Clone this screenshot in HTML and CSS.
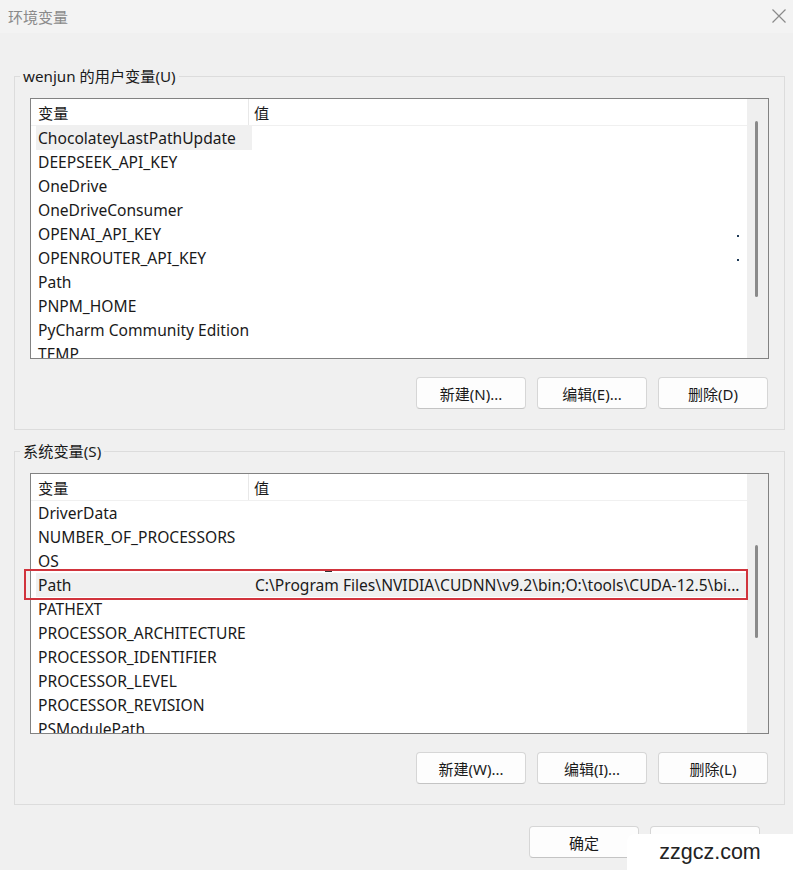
FILE: index.html
```html
<!DOCTYPE html>
<html lang="zh-CN">
<head>
<meta charset="utf-8">
<title>环境变量</title>
<link rel="stylesheet" href="styles.css">
</head>
<body>
<div class="titlebar">
  <span class="title">环境变量</span>
  <svg class="close" width="14" height="14" viewBox="0 0 14 14"><path d="M0.5 0.5 L13.5 13.5 M13.5 0.5 L0.5 13.5" stroke="#8a8a8a" stroke-width="1.2" fill="none"/></svg>
</div>
<div class="main">
  <fieldset class="group">
    <legend>wenjun 的用户变量(U)</legend>
    <div class="list">
      <div class="list-main">
        <div class="head"><div class="hname">变量</div><div class="hval">值</div></div>
        <div class="rows">
          <div class="row hover"><div class="name">ChocolateyLastPathUpdate</div><div class="val"></div></div>
          <div class="row"><div class="name">DEEPSEEK_API_KEY</div><div class="val"></div></div>
          <div class="row"><div class="name">OneDrive</div><div class="val"></div></div>
          <div class="row"><div class="name">OneDriveConsumer</div><div class="val"></div></div>
          <div class="row"><div class="name">OPENAI_API_KEY</div><div class="val"><span class="dot"></span></div></div>
          <div class="row"><div class="name">OPENROUTER_API_KEY</div><div class="val"><span class="dot"></span></div></div>
          <div class="row"><div class="name">Path</div><div class="val"></div></div>
          <div class="row"><div class="name">PNPM_HOME</div><div class="val"></div></div>
          <div class="row"><div class="name">PyCharm Community Edition</div><div class="val"></div></div>
          <div class="row"><div class="name">TEMP</div><div class="val"></div></div>
        </div>
      </div>
      <div class="scrollbar"><div class="thumb thumb-user"></div></div>
    </div>
    <div class="btns">
      <button class="btn">新建(N)...</button>
      <button class="btn">编辑(E)...</button>
      <button class="btn">删除(D)</button>
    </div>
  </fieldset>

  <fieldset class="group group-sys">
    <legend>系统变量(S)</legend>
    <div class="list-wrap">
      <div class="list">
        <div class="list-main">
          <div class="head"><div class="hname">变量</div><div class="hval">值</div></div>
          <div class="rows">
            <div class="row"><div class="name">DriverData</div><div class="val"></div></div>
            <div class="row"><div class="name">NUMBER_OF_PROCESSORS</div><div class="val"></div></div>
            <div class="row"><div class="name">OS</div><div class="val"><span class="mark"></span></div></div>
            <div class="row selected"><div class="name">Path</div><div class="val">C:\Program Files\NVIDIA\CUDNN\v9.2\bin;O:\tools\CUDA-12.5\bi...</div></div>
            <div class="row"><div class="name">PATHEXT</div><div class="val"></div></div>
            <div class="row"><div class="name">PROCESSOR_ARCHITECTURE</div><div class="val"></div></div>
            <div class="row"><div class="name">PROCESSOR_IDENTIFIER</div><div class="val"></div></div>
            <div class="row"><div class="name">PROCESSOR_LEVEL</div><div class="val"></div></div>
            <div class="row"><div class="name">PROCESSOR_REVISION</div><div class="val"></div></div>
            <div class="row"><div class="name">PSModulePath</div><div class="val"></div></div>
          </div>
        </div>
        <div class="scrollbar"><div class="thumb thumb-sys"></div></div>
      </div>
      <div class="highlight-box"></div>
    </div>
    <div class="btns">
      <button class="btn">新建(W)...</button>
      <button class="btn">编辑(I)...</button>
      <button class="btn">删除(L)</button>
    </div>
  </fieldset>

  <div class="footer">
    <button class="btn">确定</button>
    <button class="btn">取消</button>
  </div>
</div>
<div class="watermark">zzgcz.com</div>
</body>
</html>
```

FILE: styles.css
```css
html, body {
  margin: 0;
  padding: 0;
}
body {
  width: 793px;
  height: 870px;
  overflow: hidden;
  position: relative;
  background: #f0f0f0;
  font-family: "Noto Sans", "Noto Sans CJK SC", sans-serif;
  color: #1a1a1a;
}
.titlebar {
  height: 33px;
  box-sizing: border-box;
  background: #f3f3f3;
  display: flex;
  align-items: center;
  justify-content: space-between;
  padding: 0 7px 0 8px;
}
.title {
  font-family: "Noto Sans CJK SC", sans-serif;
  font-size: 15px;
  color: #8a8a8a;
  line-height: 20px;
}
.close {
  display: block;
  margin-top: -2px;
}
.main {
  padding: 0 8px 0 14px;
}
.group {
  margin: 33px 0 0;
  padding: 12px 15px 20px;
  border: 1px solid #dcdcdc;
  min-width: 0;
}
.group-sys {
  margin-top: 11px;
}
.group legend {
  font-size: 15.2px;
  line-height: 20px;
  padding: 0 3px;
  margin-left: -10px;
  color: #1a1a1a;
}
.list-wrap {
  position: relative;
}
.list {
  height: 261px;
  box-sizing: border-box;
  border: 1px solid #828282;
  background: #fff;
  display: flex;
}
.list-main {
  flex: 1;
  overflow: hidden;
  min-width: 0;
}
.head {
  height: 27px;
  box-sizing: border-box;
  border-bottom: 1px solid #f0f0f0;
  display: flex;
  font-size: 15.2px;
}
.hname {
  width: 218px;
  padding-left: 7px;
  box-sizing: border-box;
  border-right: 1px solid #e8e8e8;
  display: flex;
  align-items: center;
}
.hval {
  padding-left: 5px;
  display: flex;
  align-items: center;
}
.rows {
  padding-left: 5px;
}
.row {
  height: 24px;
  display: flex;
  align-items: center;
  font-size: 15.6px;
  white-space: nowrap;
}
.name {
  width: 216px;
  height: 100%;
  box-sizing: border-box;
  padding-left: 2px;
  display: flex;
  align-items: center;
  flex: none;
}
.val {
  flex: 1;
  min-width: 0;
  height: 100%;
  padding-left: 3px;
  display: flex;
  align-items: center;
  overflow: hidden;
}
.row.hover .name {
  background: #f0f0f0;
}
.row.selected {
  background: #f0f0f0;
  margin-right: 1px;
}
.dot {
  width: 2px;
  height: 2px;
  background: #1f3b57;
  margin-left: auto;
  margin-right: 8px;
  margin-top: 4px;
}
.mark {
  width: 7px;
  height: 1px;
  background: #333;
  margin-left: 70px;
  margin-top: 20px;
}
.scrollbar {
  width: 21px;
  flex: none;
  background: #efefef;
}
.thumb {
  width: 3px;
  margin-left: 8px;
  background: #8a8a8a;
  border-radius: 2px;
}
.thumb-user {
  margin-top: 22px;
  height: 176px;
}
.thumb-sys {
  margin-top: 71px;
  height: 93px;
}
.highlight-box {
  position: absolute;
  z-index: 2;
  left: -6px;
  top: 96px;
  width: 724px;
  height: 31px;
  border: 2px solid #d1343d;
  box-sizing: border-box;
}
.btns {
  display: flex;
  justify-content: flex-end;
  gap: 11px;
  margin-top: 18px;
  padding-right: 1px;
}
.btn {
  width: 110px;
  height: 32px;
  box-sizing: border-box;
  border: 1px solid #d6d6d6;
  border-bottom-color: #c4c4c4;
  border-radius: 4px;
  background: #fdfdfd;
  font-family: "Noto Sans", "Noto Sans CJK SC", sans-serif;
  font-size: 15px;
  color: #1a1a1a;
  padding: 0;
}
.footer {
  display: flex;
  justify-content: flex-end;
  gap: 11px;
  margin-top: 21px;
  padding-right: 25px;
}
.watermark {
  position: absolute;
  right: 0;
  bottom: 0;
  width: 166px;
  height: 36px;
  background: #fff;
  border-top-left-radius: 8px;
  font-family: "Liberation Sans", sans-serif;
  font-size: 21.5px;
  color: #222;
  display: flex;
  align-items: center;
  justify-content: center;
  padding-left: 0;
  box-sizing: border-box;
}
```
